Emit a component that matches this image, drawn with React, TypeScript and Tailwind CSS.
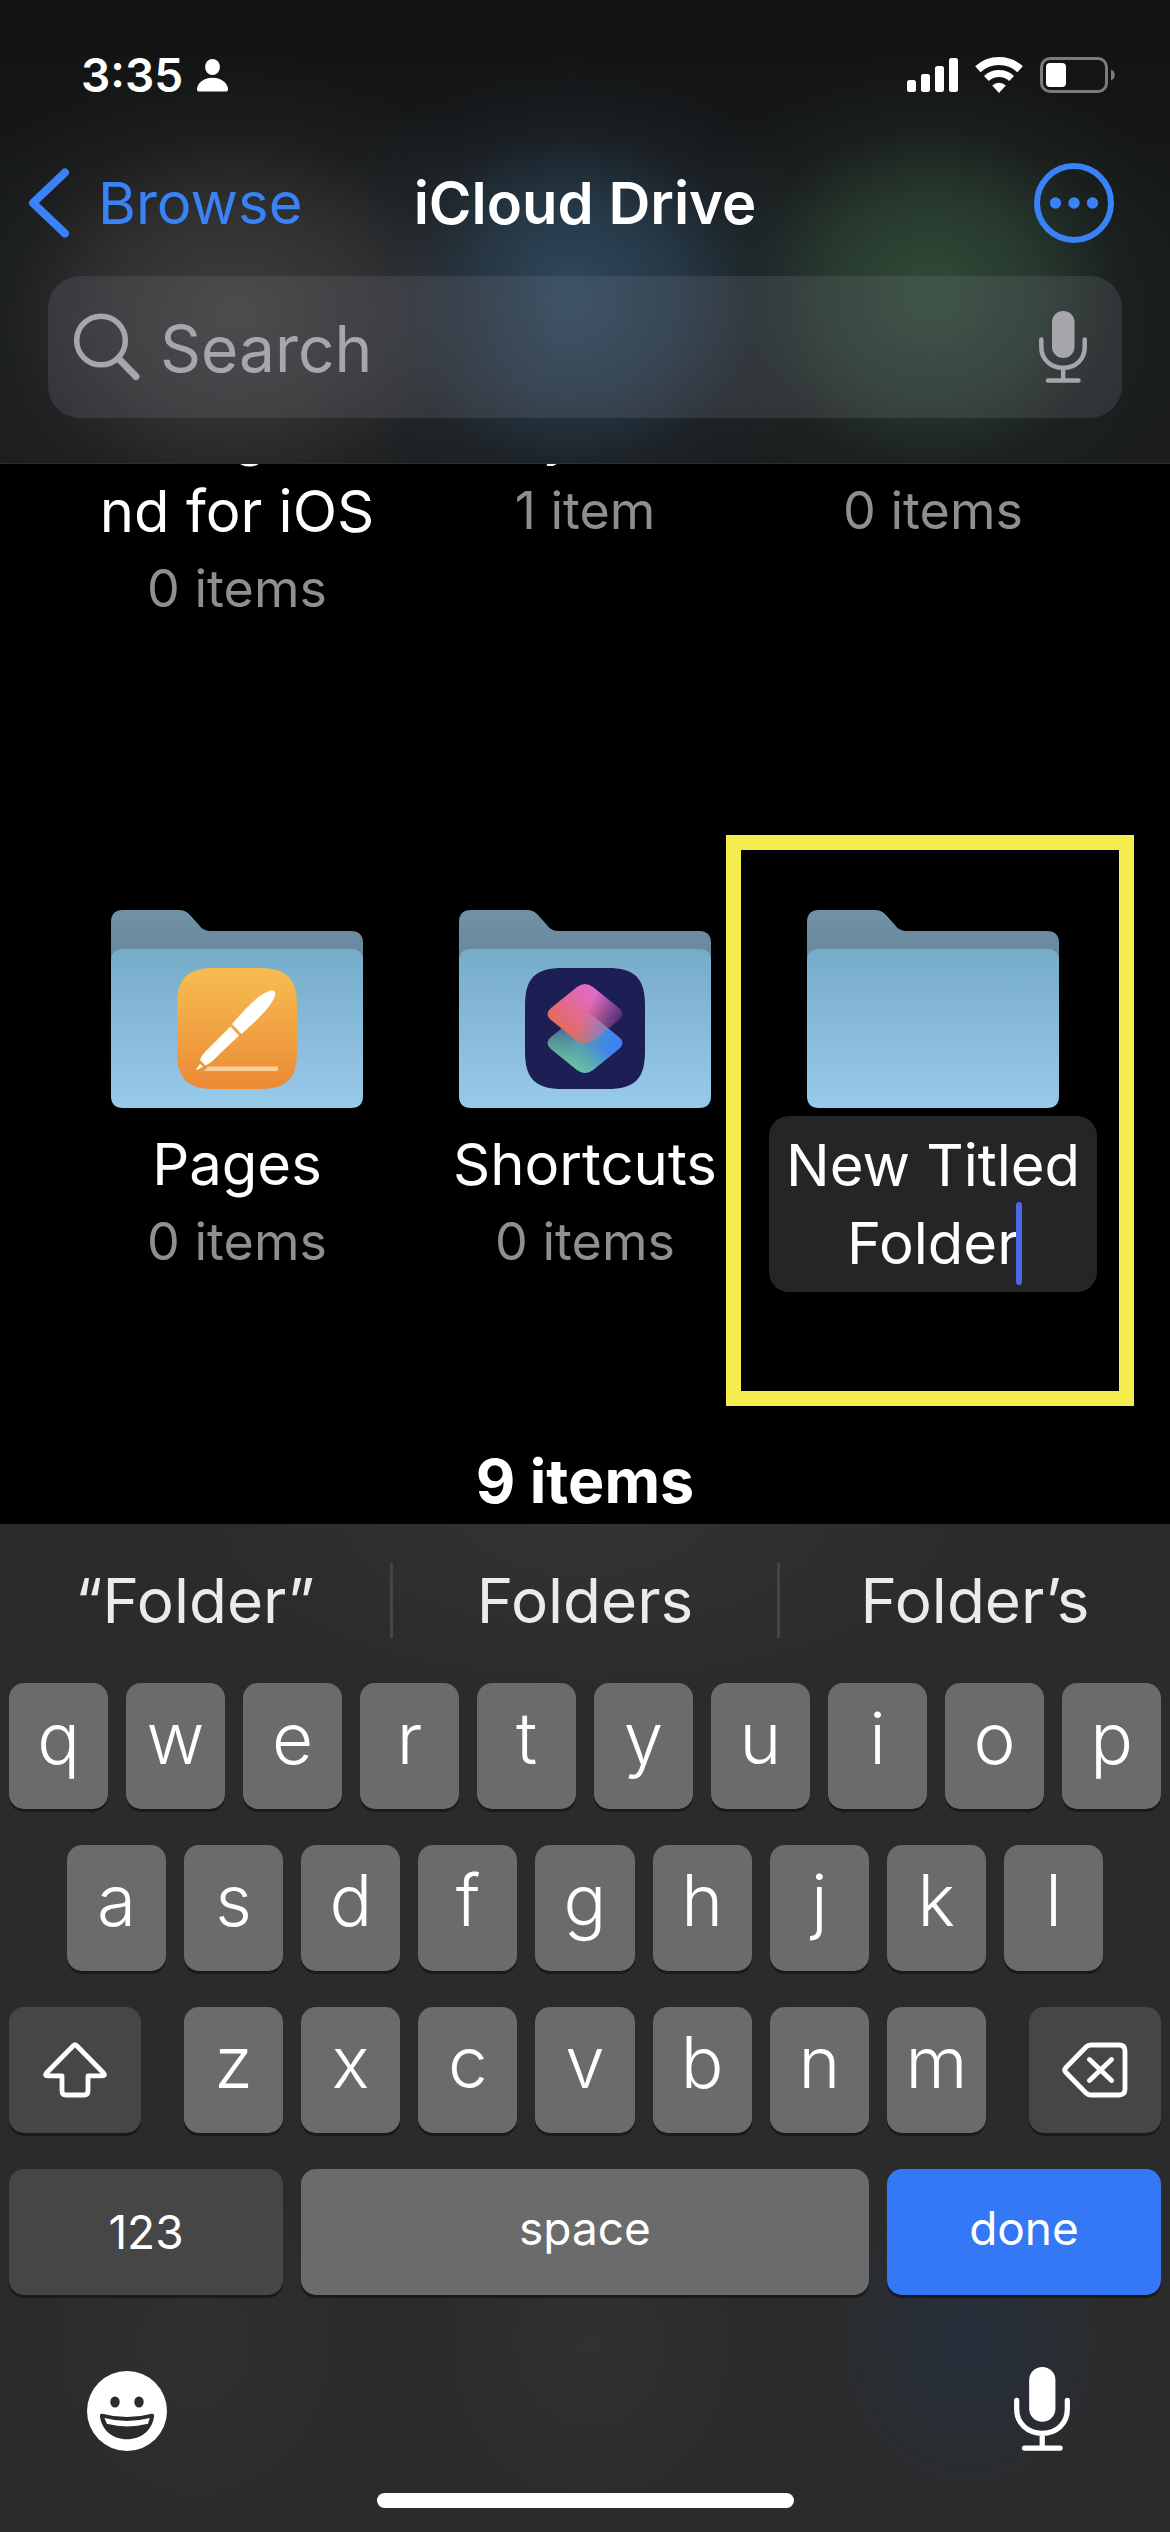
import React from 'react';

/* ---------- Status bar icons ---------- */

const PersonIcon: React.FC = () => (
  <svg viewBox="0 0 31 33" className="h-[33px] w-[31px]" fill="currentColor" aria-hidden="true">
    <ellipse cx="15.5" cy="8" rx="7.4" ry="8" />
    <path d="M2.5 32.5C.8 32.5 0 31.600 0 30.200 0 25 6 18.800 15.500 18.800S31 25 31 30.200c0 1.400-.8 2.300-2.500 2.300Z" />
  </svg>
);

const SignalIcon: React.FC = () => (
  <svg viewBox="0 0 51 34" className="h-[34px] w-[51px]" fill="currentColor" aria-hidden="true">
    <rect x="0" y="22" width="9" height="12" rx="2.500" />
    <rect x="14" y="16" width="9" height="18" rx="2.500" />
    <rect x="28" y="8" width="9" height="26" rx="2.500" />
    <rect x="42" y="0" width="9" height="34" rx="2.500" />
  </svg>
);

const WifiIcon: React.FC = () => (
  <svg viewBox="0 0 48 36" className="h-9 w-12" fill="none" stroke="currentColor" aria-hidden="true">
    <path d="M2.900 12.300A31 31 0 0 1 45.100 12.300" strokeWidth="8" />
    <path d="M11.400 21.500A18.500 18.500 0 0 1 36.600 21.500" strokeWidth="7" />
    <path d="M24 36 17.200 28.500A10 10 0 0 1 30.800 28.500Z" fill="currentColor" stroke="none" />
  </svg>
);

const BatteryIcon: React.FC = () => (
  <svg viewBox="0 0 75 36" className="h-9 w-[75px]" fill="none" aria-hidden="true">
    <rect x="1.500" y="1.500" width="65" height="33" rx="8.500" stroke="#7b7b7c" strokeWidth="3" />
    <rect x="6" y="6" width="20" height="24" rx="4" fill="#fff" />
    <path d="M71 12.500c5 2 5 9 0 11Z" fill="#7b7b7c" />
  </svg>
);

/* ---------- Navigation icons ---------- */

const ChevronIcon: React.FC = () => (
  <svg viewBox="0 0 42 72" className="h-[72px] w-[42px]" fill="none" stroke="currentColor" strokeWidth="8" strokeLinecap="round" strokeLinejoin="round" aria-hidden="true">
    <path d="M37 5.500 5 36l32 30.500" />
  </svg>
);

const MoreIcon: React.FC = () => (
  <svg viewBox="0 0 80 80" className="size-20" fill="currentColor" aria-hidden="true">
    <circle cx="40" cy="40" r="37" fill="none" stroke="currentColor" strokeWidth="6" />
    <circle cx="21.500" cy="40" r="5.700" />
    <circle cx="40" cy="40" r="5.700" />
    <circle cx="58.500" cy="40" r="5.700" />
  </svg>
);

const SearchIcon: React.FC = () => (
  <svg viewBox="0 0 66 68" className="h-[68px] w-[66px]" fill="none" stroke="currentColor" strokeLinecap="round" aria-hidden="true">
    <circle cx="27" cy="27.500" r="24.300" strokeWidth="5.500" />
    <path d="M45 46 62 63.500" strokeWidth="7" />
  </svg>
);

const MicIcon: React.FC<{ className?: string }> = ({ className = '' }) => (
  <svg viewBox="0 0 48 72" className={className} fill="none" stroke="currentColor" strokeWidth="4.500" strokeLinecap="round" aria-hidden="true">
    <rect x="13" y="0" width="22.500" height="47" rx="11.200" fill="currentColor" stroke="none" />
    <path d="M2.300 28.500v7.500c0 12.500 9.500 20.800 21.900 20.800S45.700 48.500 45.700 36v-7.500M24.200 57v12M9 69.500h30.500" />
  </svg>
);

/* ---------- Keyboard icons ---------- */

const ShiftIcon: React.FC = () => (
  <svg viewBox="0 0 64 56" className="h-14 w-16" fill="none" stroke="currentColor" strokeWidth="4.800" strokeLinejoin="round" aria-hidden="true">
    <path d="M30.500 3.500Q32 2 33.500 3.500L60.500 31q2.500 2.800-1.500 2.800H45V49q0 4-4 4H23q-4 0-4-4V33.800H5Q1 33.800 3.500 31Z" />
  </svg>
);

const DeleteIcon: React.FC = () => (
  <svg viewBox="0 0 66 56" className="h-14 w-[66px]" fill="none" stroke="currentColor" strokeWidth="4.800" strokeLinecap="round" strokeLinejoin="round" aria-hidden="true">
    <path d="M29 3H57q6 0 6 6V47q0 6-6 6H29q-3 0-5-2L4 30.500Q1.500 28 4 25.500L24 5q2-2 5-2ZM27.500 17.500 49.500 38.500M49.500 17.500 27.500 38.500" />
  </svg>
);

const EmojiIcon: React.FC = () => (
  <svg viewBox="0 0 80 80" className="size-20" aria-hidden="true">
    <circle cx="40" cy="40" r="40" fill="#fff" />
    <g fill="#2b2b2b">
      <ellipse cx="28" cy="31" rx="4.700" ry="5.500" />
      <ellipse cx="52" cy="31" rx="4.700" ry="5.500" />
      <path d="M15.500 42.700Q40 49.500 64.500 42.700 67.500 42.200 67 45.500C65.500 59 54 68.300 40 68.300S14.500 59 13 45.500Q12.500 42.200 15.500 42.700Z" />
    </g>
    <path d="M17.500 47Q40 53 62.800 47L61 52.800Q40 58 19.800 52.800Z" fill="#fff" />
  </svg>
);

/* ---------- Folder artwork ---------- */

const FolderArt: React.FC<{ id: string; children?: React.ReactNode }> = ({ id, children }) => (
  <svg viewBox="0 0 252 198" className="h-[198px] w-[252px]" aria-hidden="true">
    <defs>
      <linearGradient id={`${id}-back`} x1="0" y1="0" x2="0" y2="1">
        <stop offset="0" stopColor="#7092a6" />
        <stop offset="1" stopColor="#66859a" />
      </linearGradient>
      <linearGradient id={`${id}-front`} x1="0" y1="0" x2="0" y2="1">
        <stop offset="0" stopColor="#76abc9" />
        <stop offset="1" stopColor="#98caea" />
      </linearGradient>
    </defs>
    <path d="M0 60V12Q0 0 12 0H68Q74 0 78 4L88 15Q92 21 100 21H240Q252 21 252 33V60Z" fill={`url(#${id}-back)`} />
    <path d="M0 51Q0 39 12 39H240Q252 39 252 51V186Q252 198 240 198H12Q0 198 0 186Z" fill={`url(#${id}-front)`} />
    {children}
  </svg>
);

const PagesBadge: React.FC = () => (
  <g transform="translate(66 58)">
    <linearGradient id="pages-bg" x1="0" y1="0" x2="0" y2="1">
      <stop offset="0.100" stopColor="#f5b94e" />
      <stop offset="1" stopColor="#ec8a36" />
    </linearGradient>
    <path d="M0 38C0 10 10 0 38 0H82C110 0 120 10 120 38V83c0 28-10 38-38 38H38C10 121 0 111 0 83Z" fill="url(#pages-bg)" />
    <path d="M31 98.500H100q1 0 1 1V102q0 1-1 1H27Z" fill="#f8cd98" />
    <g fill="#fff">
      <path d="M55 56C68 41 80 28 91 23.500 96 20.500 99 23 98 27.500 94 39 82 50 64.500 66Z" />
      <path d="M53.500 58.500 62 67.500 37 91.500Q33 95.500 28.500 97.500L23 92Q24.500 87.500 28.500 83.500Z" />
      <path d="M23 96 26 98.500 20 102Q19 102 19.300 101Z" />
    </g>
  </g>
);

const ShortcutsBadge: React.FC = () => (
  <g transform="translate(66 58)">
    <defs>
      <linearGradient id="sc-low" x1="24" y1="68" x2="94" y2="80" gradientUnits="userSpaceOnUse">
        <stop offset="0" stopColor="#47607f" />
        <stop offset="0.450" stopColor="#5098b8" />
        <stop offset="1" stopColor="#3a80fa" />
      </linearGradient>
      <linearGradient id="sc-green" x1="52" y1="104" x2="66" y2="76" gradientUnits="userSpaceOnUse">
        <stop offset="0" stopColor="#6bc3a0" />
        <stop offset="1" stopColor="#6bc3a0" stopOpacity="0" />
      </linearGradient>
      <linearGradient id="sc-up" x1="30" y1="56" x2="66" y2="18" gradientUnits="userSpaceOnUse">
        <stop offset="0" stopColor="#e36b5c" />
        <stop offset="1" stopColor="#e26ad0" />
      </linearGradient>
      <linearGradient id="sc-fade" x1="62" y1="42" x2="92" y2="58" gradientUnits="userSpaceOnUse">
        <stop offset="0" stopColor="#fff" />
        <stop offset="1" stopColor="#fff" stopOpacity="0.250" />
      </linearGradient>
      <mask id="sc-mask">
        <rect width="120" height="121" fill="url(#sc-fade)" />
      </mask>
    </defs>
    <path d="M0 38C0 10 10 0 38 0H82C110 0 120 10 120 38V83c0 28-10 38-38 38H38C10 121 0 111 0 83Z" fill="#1c1e54" />
    <path d="M52 48Q60 42 68 48L94 69Q101 75 94 81L68 102Q60 108 52 102L26 81Q19 75 26 69Z" fill="url(#sc-low)" />
    <path d="M52 48Q60 42 68 48L94 69Q101 75 94 81L68 102Q60 108 52 102L26 81Q19 75 26 69Z" fill="url(#sc-green)" />
    <path d="M52 19Q60 13 68 19L94 40Q101 46 94 52L68 73Q60 79 52 73L26 52Q19 46 26 40Z" fill="url(#sc-up)" mask="url(#sc-mask)" />
  </g>
);

/* ---------- Files list ---------- */

const ItemName: React.FC<{ children: React.ReactNode }> = ({ children }) => (
  <h2 className="text-[58px] leading-[78px] whitespace-nowrap">{children}</h2>
);

const ItemCount: React.FC<{ children: React.ReactNode }> = ({ children }) => (
  <p className="text-[52px] leading-[78px] text-[#8e8e93]">{children}</p>
);

const Files: React.FC = () => (
  <main className="flex flex-1 flex-col items-center bg-black pb-1">
    {/* First row is scrolled half way under the header */}
    <ul className="-mt-[70px] grid w-full grid-cols-3 px-[63px] text-center">
      <li>
        <ItemName>GarageBa<br />nd for iOS</ItemName>
        <ItemCount>0 items</ItemCount>
      </li>
      <li>
        <ItemName>Keynote</ItemName>
        <ItemCount>1 item</ItemCount>
      </li>
      <li>
        <ItemName>Numbers</ItemName>
        <ItemCount>0 items</ItemCount>
      </li>
    </ul>

    <ul className="mt-[282px] grid w-full grid-cols-3 px-[63px] text-center">
      <li className="flex flex-col items-center">
        <FolderArt id="pages"><PagesBadge /></FolderArt>
        <div className="mt-[17px]">
          <ItemName>Pages</ItemName>
          <ItemCount>0 items</ItemCount>
        </div>
      </li>
      <li className="flex flex-col items-center">
        <FolderArt id="shortcuts"><ShortcutsBadge /></FolderArt>
        <div className="mt-[17px]">
          <ItemName>Shortcuts</ItemName>
          <ItemCount>0 items</ItemCount>
        </div>
      </li>
      <li className="relative flex flex-col items-center">
        <FolderArt id="untitled" />
        <div className="relative mt-2 w-[328px]">
          <textarea
            aria-label="Folder name"
            rows={2}
            defaultValue={'New Titled\nFolder'}
            className="block w-full resize-none overflow-hidden rounded-[20px] bg-[#252527] py-2.5 text-center text-[58px] leading-[78px] text-white outline-none"
          />
          <span className="absolute top-[86px] left-[247px] h-[83px] w-1.5 rounded-full bg-[#4b68e8]" />
        </div>
        {/* Highlight frame */}
        <div className="pointer-events-none absolute -top-[75px] -right-[27px] -left-[33px] h-[571px] border-[15px] border-[#f5ec4d]" />
      </li>
    </ul>

    <p className="mt-auto text-[61px] leading-[78px] font-bold">9 items</p>
  </main>
);

/* ---------- Header ---------- */

const Header: React.FC = () => (
  <header className="relative z-10 border-b border-[#2c2d2f] bg-[#131414] bg-[radial-gradient(320px_260px_at_235px_315px,#413f3f_0%,#3a3939bb_40%,#2a2b2c55_70%,transparent_100%),radial-gradient(270px_240px_at_570px_300px,#2f4a60_0%,#2b4356bb_40%,#22303b55_70%,transparent_100%),radial-gradient(270px_240px_at_930px_295px,#304c39_0%,#2d4434bb_40%,#232f2855_70%,transparent_100%),linear-gradient(to_bottom,#121212_0%,#171a1b_50%,#1a1c1d_100%)] pb-[45px]">
    <div className="flex h-[150px] items-center justify-between pr-[55px] pl-[81px]">
      <div className="flex items-center gap-3.5">
        <time className="text-[46px] leading-none font-semibold">3:35</time>
        <PersonIcon />
      </div>
      <div className="flex items-center gap-[17px]">
        <SignalIcon />
        <WifiIcon />
        <BatteryIcon />
      </div>
    </div>

    <nav className="grid h-[106px] grid-cols-[1fr_auto_1fr] items-center px-7">
      <a href="#browse" className="flex items-center gap-7 justify-self-start text-[#3a82f7]">
        <ChevronIcon />
        <span className="text-[58px] leading-none">Browse</span>
      </a>
      <h1 className="text-[58px] leading-none font-semibold">iCloud Drive</h1>
      <button type="button" aria-label="More" className="mr-7 justify-self-end text-[#3a82f7]">
        <MoreIcon />
      </button>
    </nav>

    <div className="mx-12 mt-5 flex h-[142px] items-center rounded-[32px] bg-[#7676803d] pr-[35px] pl-[26px] text-[#a6a7ad]">
      <SearchIcon />
      <input
        type="search"
        aria-label="Search"
        placeholder="Search"
        className="mt-1 ml-5 min-w-0 flex-1 bg-transparent text-[64px] leading-[78px] outline-none placeholder:text-[#a6a7ad]"
      />
      <button type="button" aria-label="Dictate">
        <MicIcon className="h-[72px] w-12" />
      </button>
    </div>
  </header>
);

/* ---------- Keyboard ---------- */

const Key: React.FC<{ label: string }> = ({ label }) => (
  <button type="button" className="flex h-[126px] min-w-0 flex-1 items-center justify-center rounded-[15px] bg-[#6b6b6b] pb-4 text-[71px] leading-none font-[350] shadow-[0_3px_0_#1a1a1a]">
    {label}
  </button>
);

const Keyboard: React.FC = () => (
  <section aria-label="Keyboard" className="bg-[#2b2b2b] bg-[radial-gradient(400px_170px_at_50%_0px,#333333_0%,transparent_100%),radial-gradient(150px_170px_at_968px_815px,#272f3b_0%,#282e36_40%,transparent_100%),radial-gradient(160px_180px_at_195px_820px,#303030_0%,transparent_100%),radial-gradient(160px_180px_at_590px_820px,#313131_0%,transparent_100%)] pb-6">
    <div className="grid h-[153px] grid-cols-3 items-center text-[62px] leading-[75px] text-[#ebebeb]">
      <button type="button">“Folder”</button>
      <button type="button" className="border-x-[3px] border-[#454545]">Folders</button>
      <button type="button">Folder’s</button>
    </div>

    <div className="mt-1.5 flex flex-col gap-9 px-[9px]">
      <div className="flex gap-[18px]">
        {'qwertyuiop'.split('').map((k) => <Key key={k} label={k} />)}
      </div>
      <div className="flex gap-[18px] px-[58px]">
        {'asdfghjkl'.split('').map((k) => <Key key={k} label={k} />)}
      </div>
      <div className="flex gap-[43px]">
        <button type="button" aria-label="Shift" className="flex h-[126px] w-[132px] items-center justify-center rounded-[15px] bg-[#464646] shadow-[0_3px_0_#1a1a1a]">
          <ShiftIcon />
        </button>
        <div className="flex flex-1 gap-[18px]">
          {'zxcvbnm'.split('').map((k) => <Key key={k} label={k} />)}
        </div>
        <button type="button" aria-label="Delete" className="flex h-[126px] w-[132px] items-center justify-center rounded-[15px] bg-[#464646] shadow-[0_3px_0_#1a1a1a]">
          <DeleteIcon />
        </button>
      </div>
      <div className="flex gap-[18px] text-[46px] leading-none">
        <button type="button" className="h-[126px] w-[274px] rounded-[15px] bg-[#464646] shadow-[0_3px_0_#1a1a1a]">123</button>
        <button type="button" className="h-[126px] flex-1 rounded-[15px] bg-[#6b6b6b] pb-2 shadow-[0_3px_0_#1a1a1a]">space</button>
        <button type="button" className="h-[126px] w-[274px] rounded-[15px] bg-[#3478f6] pb-2 shadow-[0_3px_0_#1a1a1a]">done</button>
      </div>
    </div>

    <div className="mt-[72px] flex items-end justify-between pr-[100px] pl-[87px]">
      <button type="button" aria-label="Emoji"><EmojiIcon /></button>
      <button type="button" aria-label="Dictation"><MicIcon className="h-[84px] w-14" /></button>
    </div>

    <div className="mx-auto mt-[42px] h-[15px] w-[417px] rounded-full bg-white" />
  </section>
);

export default function App() {
  return (
    <div className="flex min-h-screen flex-col overflow-hidden bg-black font-[Inter,'Liberation_Sans',sans-serif] text-white">
      <Header />
      <Files />
      <Keyboard />
    </div>
  );
}
